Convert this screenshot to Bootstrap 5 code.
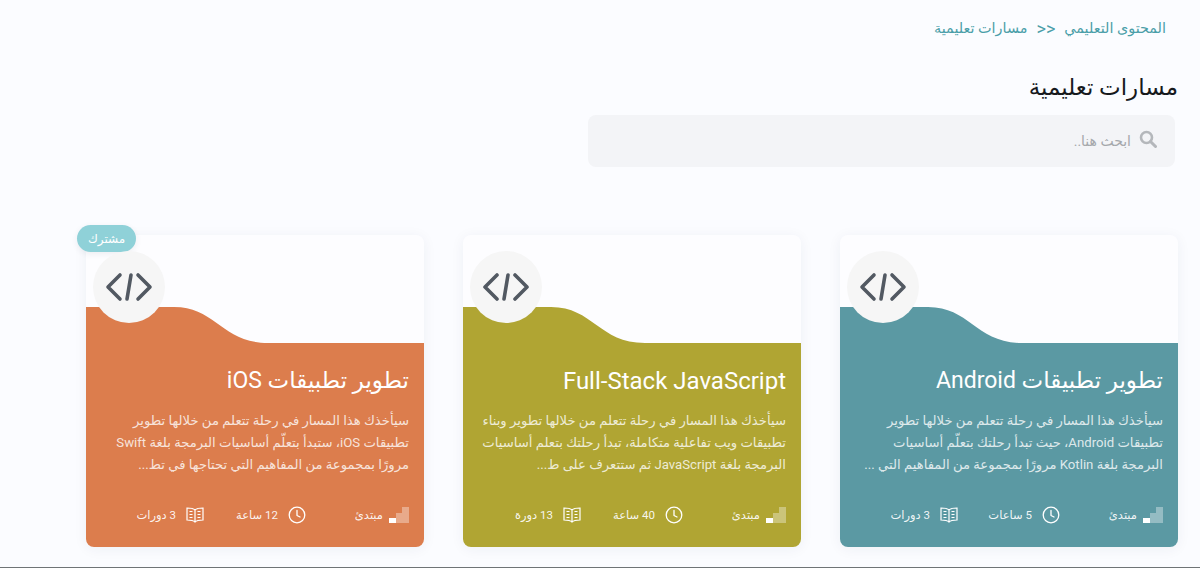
<!DOCTYPE html>
<html lang="ar" dir="rtl">
<head>
    <meta charset="UTF-8">
    <meta name="viewport" content="width=device-width, initial-scale=1.0">
    <title>مسارات تعليمية</title>
    <link href="https://cdn.jsdelivr.net/npm/bootstrap@5.3.0/dist/css/bootstrap.min.css" rel="stylesheet">
    <style>
        html, body {
            height: 568px;
            overflow: hidden;
        }
        body {
            background-color: #fbfcff;
            font-family: Roboto, "DejaVu Sans", sans-serif;
            border-bottom: 1px solid #6f7476;
        }
        .page-wrap {
            padding: 19px 22px 0 22px;
        }
        .crumbs {
            color: #4a9ea8;
            font-size: 14.4px;
            line-height: 20px;
            padding-right: 12px;
            gap: 9px;
        }
        .crumbs a {
            color: inherit;
            text-decoration: none;
        }
        .crumb-sep {
            font-size: 18px;
            font-weight: 400;
        }
        .page-title {
            font-size: 23px;
            line-height: 32px;
            font-weight: 400;
            color: #16191c;
            margin: 33px 0 11px;
        }
        .search-box {
            width: 587px;
            height: 52px;
            margin-right: 3px;
            background: #f3f4f7;
            border-radius: 8px;
            padding: 0 18px;
            gap: 8px;
            color: #a5a8ac;
            font-size: 14px;
        }
        .search-box svg {
            margin-bottom: 5px;
        }
        .track-row {
            margin-top: 68px;
            gap: 39px;
            padding-left: 64px;
        }
        .track-card {
            width: 338px;
            height: 312px;
            border-radius: 8px;
            background: #fdfdff;
            box-shadow: 0 2px 14px rgba(40, 50, 80, .06);
            position: relative;
            color: #fff;
        }
        .wave {
            display: block;
            width: 338px;
            height: 109px;
            border-radius: 8px 8px 0 0;
        }
        .track-body {
            border-radius: 0 0 8px 8px;
            padding: 20px 15px 0 14px;
            height: 203px;
        }
        .track-title {
            font-size: 23px;
            line-height: 34px;
            font-weight: 400;
            margin: 0 0 12px;
        }
        .title-wide {
            font-size: 24px;
        }
        .track-text {
            font-size: 13.2px;
            line-height: 22px;
            color: rgba(255, 255, 255, .8);
            height: 66px;
            margin: 0 0 29px;
            white-space: nowrap;
        }
        .track-meta {
            font-size: 11.5px;
            line-height: 20px;
            color: rgba(255, 255, 255, .92);
        }
        .meta-item {
            width: 102px;
            gap: 10px;
        }
        .meta-item.meta-level {
            width: 103px;
            gap: 6px;
        }
        .icon-circle {
            position: absolute;
            top: 16px;
            left: 7px;
            width: 72px;
            height: 72px;
            border-radius: 50%;
            background: #f6f6f6;
        }
        .sub-tag {
            position: absolute;
            top: -10px;
            left: -9px;
            width: 59px;
            height: 27px;
            border-radius: 14px;
            background: #8fd1d8;
            color: #fff;
            font-size: 12px;
            box-shadow: 0 2px 6px rgba(40, 50, 80, .08);
        }
        .bg-teal { background-color: #5b99a3; }
        .bg-olive { background-color: #b0a533; }
        .bg-orange { background-color: #dc7d4d; }
        .fill-teal { fill: #5b99a3; }
        .fill-olive { fill: #b0a533; }
        .fill-orange { fill: #dc7d4d; }
    </style>
</head>
<body>

<svg width="0" height="0" class="d-block" aria-hidden="true">
    <symbol id="i-code" viewBox="0 0 48 32">
        <path d="M15 4 3 16 15 28M33 4l12 12L33 28M26 4l-4 24" fill="none" stroke="#525962" stroke-width="3.600" stroke-linecap="round" stroke-linejoin="round"/>
    </symbol>
    <symbol id="i-level" viewBox="0 0 20 16">
        <rect x="0" y="11" width="7" height="5" fill="#fff"/>
        <rect x="7" y="6" width="6" height="10" fill="#fff" fill-opacity=".35"/>
        <rect x="13" y="0" width="7" height="16" fill="#fff" fill-opacity=".35"/>
    </symbol>
    <symbol id="i-clock" viewBox="0 0 18 18">
        <circle cx="9" cy="9" r="7.800" fill="none" stroke="#fff" stroke-width="1.300"/>
        <path d="M9 4.500V9.500L12 11" fill="none" stroke="#fff" stroke-width="1.300" stroke-linecap="round" stroke-linejoin="round"/>
    </symbol>
    <symbol id="i-book" viewBox="0 0 18 16">
        <path d="M9 3C7.500 1.500 4.500 1 1 1v12c3.500 0 6.500.5 8 2 1.500-1.500 4.500-2 8-2V1c-3.500 0-6.500.5-8 2ZM9 3v12M3.500 4.500h3M3.500 7.500h3M3.500 10.500h3M11.500 4.500h3M11.500 7.500h3M11.500 10.500h3" fill="none" stroke="#fff" stroke-width="1.200"/>
    </symbol>
</svg>

<div class="page-wrap">
    <nav class="crumbs d-flex align-items-center">
        <a href="#">المحتوى التعليمي</a>
        <span class="crumb-sep" dir="ltr">&gt;&gt;</span>
        <a href="#">مسارات تعليمية</a>
    </nav>

    <h1 class="page-title">مسارات تعليمية</h1>

    <div class="search-box d-flex align-items-center">
        <svg width="18" height="18" viewBox="0 0 18 18">
            <circle cx="7.500" cy="7.500" r="5.500" fill="none" stroke="#b4b7bb" stroke-width="2.600"/>
            <path d="m11.500 11.500 5 5" stroke="#b4b7bb" stroke-width="3" stroke-linecap="round"/>
        </svg>
        <span>ابحث هنا..</span>
    </div>

    <div class="track-row d-flex">
        <div class="track-card">
            <svg class="wave" viewBox="0 0 338 109" preserveAspectRatio="none">
                <path class="fill-teal" d="M0 72H88C130 72 136 108 182 108H338V109H0Z"/>
            </svg>
            <div class="icon-circle d-flex align-items-center justify-content-center">
                <svg width="48" height="32"><use href="#i-code"/></svg>
            </div>
            <div class="track-body bg-teal">
                <h2 class="track-title">تطوير تطبيقات Android</h2>
                <p class="track-text">سيأخذك هذا المسار في رحلة تتعلم من خلالها تطوير<br>تطبيقات Android، حيث تبدأ رحلتك بتعلّم أساسيات<br>البرمجة بلغة Kotlin مرورًا بمجموعة من المفاهيم التي ...</p>
                <div class="track-meta d-flex align-items-center">
                    <div class="meta-item meta-level d-flex align-items-center"><svg width="20" height="16"><use href="#i-level"/></svg><span>مبتدئ</span></div>
                    <div class="meta-item d-flex align-items-center"><svg width="18" height="18"><use href="#i-clock"/></svg><span>5 ساعات</span></div>
                    <div class="meta-item d-flex align-items-center"><svg width="18" height="16"><use href="#i-book"/></svg><span>3 دورات</span></div>
                </div>
            </div>
        </div>

        <div class="track-card">
            <svg class="wave" viewBox="0 0 338 109" preserveAspectRatio="none">
                <path class="fill-olive" d="M0 72H88C130 72 136 108 182 108H338V109H0Z"/>
            </svg>
            <div class="icon-circle d-flex align-items-center justify-content-center">
                <svg width="48" height="32"><use href="#i-code"/></svg>
            </div>
            <div class="track-body bg-olive">
                <h2 class="track-title title-wide">Full-Stack JavaScript</h2>
                <p class="track-text">سيأخذك هذا المسار في رحلة تتعلم من خلالها تطوير وبناء<br>تطبيقات ويب تفاعلية متكاملة، تبدأ رحلتك بتعلم أساسيات<br>البرمجة بلغة JavaScript ثم ستتعرف على ط...</p>
                <div class="track-meta d-flex align-items-center">
                    <div class="meta-item meta-level d-flex align-items-center"><svg width="20" height="16"><use href="#i-level"/></svg><span>مبتدئ</span></div>
                    <div class="meta-item d-flex align-items-center"><svg width="18" height="18"><use href="#i-clock"/></svg><span>40 ساعة</span></div>
                    <div class="meta-item d-flex align-items-center"><svg width="18" height="16"><use href="#i-book"/></svg><span>13 دورة</span></div>
                </div>
            </div>
        </div>

        <div class="track-card">
            <span class="sub-tag d-flex align-items-center justify-content-center">مشترك</span>
            <svg class="wave" viewBox="0 0 338 109" preserveAspectRatio="none">
                <path class="fill-orange" d="M0 72H88C130 72 136 108 182 108H338V109H0Z"/>
            </svg>
            <div class="icon-circle d-flex align-items-center justify-content-center">
                <svg width="48" height="32"><use href="#i-code"/></svg>
            </div>
            <div class="track-body bg-orange">
                <h2 class="track-title">تطوير تطبيقات iOS</h2>
                <p class="track-text">سيأخذك هذا المسار في رحلة تتعلم من خلالها تطوير<br>تطبيقات iOS، ستبدأ بتعلّم أساسيات البرمجة بلغة Swift<br>مرورًا بمجموعة من المفاهيم التي تحتاجها في تط...</p>
                <div class="track-meta d-flex align-items-center">
                    <div class="meta-item meta-level d-flex align-items-center"><svg width="20" height="16"><use href="#i-level"/></svg><span>مبتدئ</span></div>
                    <div class="meta-item d-flex align-items-center"><svg width="18" height="18"><use href="#i-clock"/></svg><span>12 ساعة</span></div>
                    <div class="meta-item d-flex align-items-center"><svg width="18" height="16"><use href="#i-book"/></svg><span>3 دورات</span></div>
                </div>
            </div>
        </div>
    </div>
</div>

<script src="https://cdn.jsdelivr.net/npm/bootstrap@5.3.0/dist/js/bootstrap.bundle.min.js"></script>
</body>
</html>
